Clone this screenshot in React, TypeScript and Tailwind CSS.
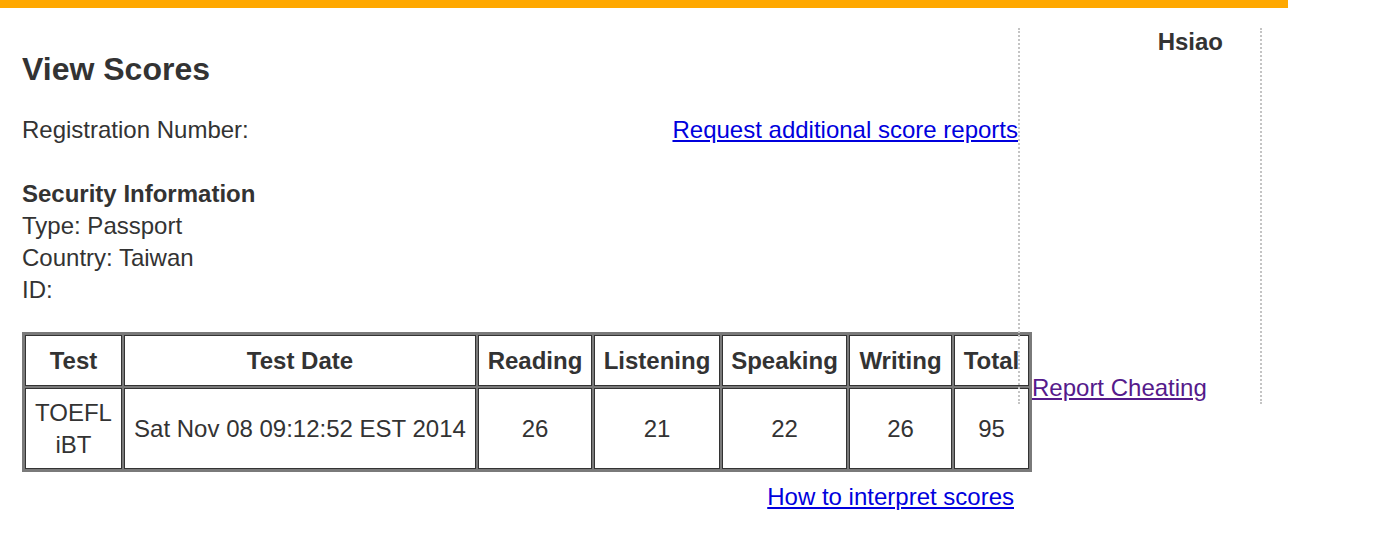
import React from "react";

const headers = [
  { label: "Test", w: "w-[97px]" },
  { label: "Test Date", w: "w-[352px]" },
  { label: "Reading", w: "w-[114px]" },
  { label: "Listening", w: "w-[126px]" },
  { label: "Speaking", w: "w-[125px]" },
  { label: "Writing", w: "w-[103px]" },
  { label: "Total", w: "w-[75px]" },
];

const row = ["TOEFL iBT", "Sat Nov 08 09:12:52 EST 2014", "26", "21", "22", "26", "95"];

export default function App() {
  return (
    <div className="min-h-[544px] bg-white font-['Liberation_Sans',Arial,sans-serif] text-[24px] leading-[32px] text-[#333]">
      <div className="h-2 w-[1288px] bg-[#ffa800]" />
      <div className="flex items-start">
        <div className="w-[1018px] shrink-0 pl-[22px]">
          <h1 className="mt-[41px] text-[32px] leading-[40px] font-bold">View Scores</h1>
          <div className="mt-[25px] flex justify-between">
            <span>Registration Number:</span>
            <a href="#" className="text-[#0000dd] underline">
              Request additional score reports
            </a>
          </div>
          <div className="mt-[32px]">
            <div className="font-bold">Security Information</div>
            <div>Type: Passport</div>
            <div>Country: Taiwan</div>
            <div>ID:</div>
          </div>
          <table className="mt-[26px] w-[1010px] table-fixed border-separate border-spacing-[2px] border border-[#7a7a7a] bg-[#7a7a7a]">
            <thead>
              <tr>
                {headers.map((h) => (
                  <th
                    key={h.label}
                    className={`${h.w} h-[51px] border border-[#333] bg-white px-[6px] py-0 text-center font-bold`}
                  >
                    {h.label}
                  </th>
                ))}
              </tr>
            </thead>
            <tbody>
              <tr>
                {row.map((c, i) => (
                  <td
                    key={i}
                    className="h-[81px] border border-[#333] bg-white px-[8px] py-0 text-center"
                  >
                    {c}
                  </td>
                ))}
              </tr>
            </tbody>
          </table>
          <div className="mt-[9px] flex justify-end pr-[4px]">
            <a href="#" className="text-[#0000dd] underline">
              How to interpret scores
            </a>
          </div>
        </div>
        <div className="mt-[20px] w-[244px] shrink-0 border-x-2 border-dotted border-[#c4c4c4]">
          <div className="pr-[37px] text-right font-bold leading-[28px]">Hsiao</div>
          <div className="mt-[316px] pl-[12px]">
            <a href="#" className="text-[#551a8b] underline">
              Report Cheating
            </a>
          </div>
        </div>
      </div>
    </div>
  );
}
